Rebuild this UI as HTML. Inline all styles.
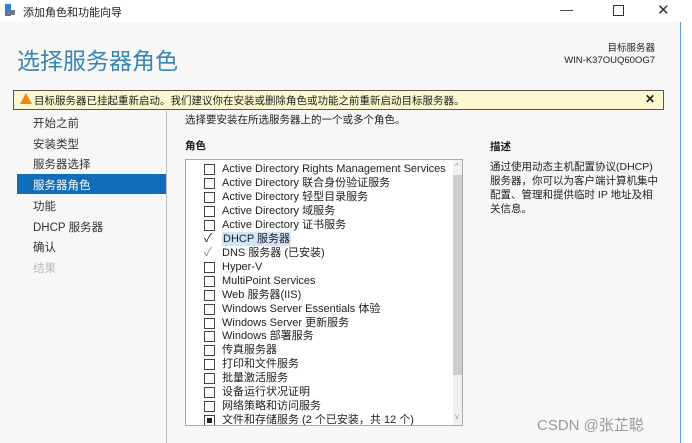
<!DOCTYPE html>
<html><head><meta charset="utf-8"><style>
*{margin:0;padding:0;box-sizing:border-box}
body{width:692px;height:443px;overflow:hidden;background:#fff;font-family:"Liberation Sans","Noto Sans CJK SC",sans-serif;color:#1e1e1e;position:relative;font-size:11px}
.a{position:absolute;white-space:nowrap}
#body{position:absolute;left:0;top:22px;width:681px;height:421px;background:#f7f7f7;border-right:1px solid #5a9ad8}
.nav{position:absolute;left:33px;font-size:11.5px;color:#333;white-space:nowrap}
.row{position:absolute;left:204px;width:245px;height:14px;font-size:11px;line-height:14px;white-space:nowrap}
.cb{position:absolute;left:0;top:2px;width:11px;height:11px;border:1px solid #444;background:#fff}
.row span{position:absolute;left:18px;top:0;white-space:nowrap}
</style></head><body>
<div class="a" style="left:5px;top:4px;width:6px;height:12px;background:#2a7fd4"></div>
<div class="a" style="left:7px;top:10px;width:8px;height:5px;background:#778"></div>
<div class="a" style="left:23px;top:4px;font-size:11px">添加角色和功能向导</div>
<div class="a" style="left:560px;top:2px;font-size:13px;color:#333">—</div>
<div class="a" style="left:613px;top:5px;width:11px;height:11px;border:1px solid #333"></div>
<div class="a" style="left:657px;top:1px;font-size:15px;color:#333">✕</div>
<div id="body"></div>
<div class="a" style="left:17px;top:42px;font-size:23px;color:#3786b4">选择服务器角色</div>
<div class="a" style="right:37px;top:43px;font-size:9.5px;text-align:right;line-height:12px">目标服务器<br>WIN-K37OUQ60OG7</div>
<div class="a" style="left:13px;top:90px;width:651px;height:20px;background:#fbf7cf;border:1px solid #555"></div>
<div class="a" style="left:20px;top:93px;width:0;height:0;border-left:6px solid transparent;border-right:6px solid transparent;border-bottom:11px solid #e88a1a"></div>
<div class="a" style="left:34px;top:93px;font-size:10.5px">目标服务器已挂起重新启动。我们建议你在安装或删除角色或功能之前重新启动目标服务器。</div>
<div class="a" style="left:645px;top:92px;font-size:12px;font-weight:bold">✕</div>
<div class="a" style="left:166px;top:111px;width:1px;height:332px;background:#bbb"></div>
<div class="nav" style="top:115px">开始之前</div>
<div class="nav" style="top:136px">安装类型</div>
<div class="nav" style="top:156px">服务器选择</div>
<div class="a" style="left:17px;top:174px;width:149px;height:20px;background:#0f6dba"></div>
<div class="nav" style="top:177px;color:#fff">服务器角色</div>
<div class="nav" style="top:198px">功能</div>
<div class="nav" style="top:219px">DHCP 服务器</div>
<div class="nav" style="top:239px">确认</div>
<div class="nav" style="top:260px;color:#bbb">结果</div>
<div class="a" style="left:185px;top:112px;font-size:10.5px">选择要安装在所选服务器上的一个或多个角色。</div>
<div class="a" style="left:185px;top:138px;font-size:10.5px;font-weight:bold">角色</div>
<div class="a" style="left:185px;top:159px;width:278px;height:267px;background:#fff;border:1px solid #aaa;overflow:hidden">
<div style="position:absolute;left:267px;top:0;width:10px;height:267px;background:#f0f0f0"></div>
<div style="position:absolute;left:267px;top:15px;width:10px;height:200px;background:#cdcdcd"></div>
<div style="position:absolute;left:269px;top:2px;font-size:8px;color:#999">^</div>
<div style="position:absolute;left:269px;top:252px;font-size:8px;color:#999">v</div>
</div>
<div class="row" style="top:162px"><i class="cb"></i><span>Active Directory Rights Management Services</span></div>
<div class="row" style="top:176px"><i class="cb"></i><span>Active Directory 联合身份验证服务</span></div>
<div class="row" style="top:190px"><i class="cb"></i><span>Active Directory 轻型目录服务</span></div>
<div class="row" style="top:204px"><i class="cb"></i><span>Active Directory 域服务</span></div>
<div class="row" style="top:218px"><i class="cb"></i><span>Active Directory 证书服务</span></div>
<div class="row" style="top:232px"><i class="cb" style="border:none;background:none;top:-1px;font-style:normal;font-size:12px">✓</i><span style="background:#cfe4f8;padding:0 1px">DHCP 服务器</span></div>
<div class="row" style="top:246px"><i class="cb" style="border:none;background:none;top:-1px;font-style:normal;font-size:12px;color:#888">✓</i><span>DNS 服务器 (已安装)</span></div>
<div class="row" style="top:260px"><i class="cb"></i><span>Hyper-V</span></div>
<div class="row" style="top:274px"><i class="cb"></i><span>MultiPoint Services</span></div>
<div class="row" style="top:288px"><i class="cb"></i><span>Web 服务器(IIS)</span></div>
<div class="row" style="top:302px"><i class="cb"></i><span>Windows Server Essentials 体验</span></div>
<div class="row" style="top:316px"><i class="cb"></i><span>Windows Server 更新服务</span></div>
<div class="row" style="top:329px"><i class="cb"></i><span>Windows 部署服务</span></div>
<div class="row" style="top:343px"><i class="cb"></i><span>传真服务器</span></div>
<div class="row" style="top:357px"><i class="cb"></i><span>打印和文件服务</span></div>
<div class="row" style="top:371px"><i class="cb"></i><span>批量激活服务</span></div>
<div class="row" style="top:385px"><i class="cb"></i><span>设备运行状况证明</span></div>
<div class="row" style="top:399px"><i class="cb"></i><span>网络策略和访问服务</span></div>
<div class="a" style="left:186px;top:413px;width:266px;height:12px;overflow:hidden">
<div class="row" style="left:18px;top:0"><i class="cb"><b style="position:absolute;left:2px;top:2px;width:5px;height:5px;background:#222"></b></i><span>文件和存储服务 (2 个已安装，共 12 个)</span></div></div>
<div class="a" style="left:490px;top:139px;font-size:10.5px;font-weight:bold">描述</div>
<div class="a" style="left:490px;top:160px;font-size:10.5px;line-height:14px">通过使用动态主机配置协议(DHCP)<br>服务器，你可以为客户端计算机集中<br>配置、管理和提供临时 IP 地址及相<br>关信息。</div>
<div class="a" style="left:537px;top:414px;font-size:15px;color:#999">CSDN @张芷聪</div>
</body></html>
